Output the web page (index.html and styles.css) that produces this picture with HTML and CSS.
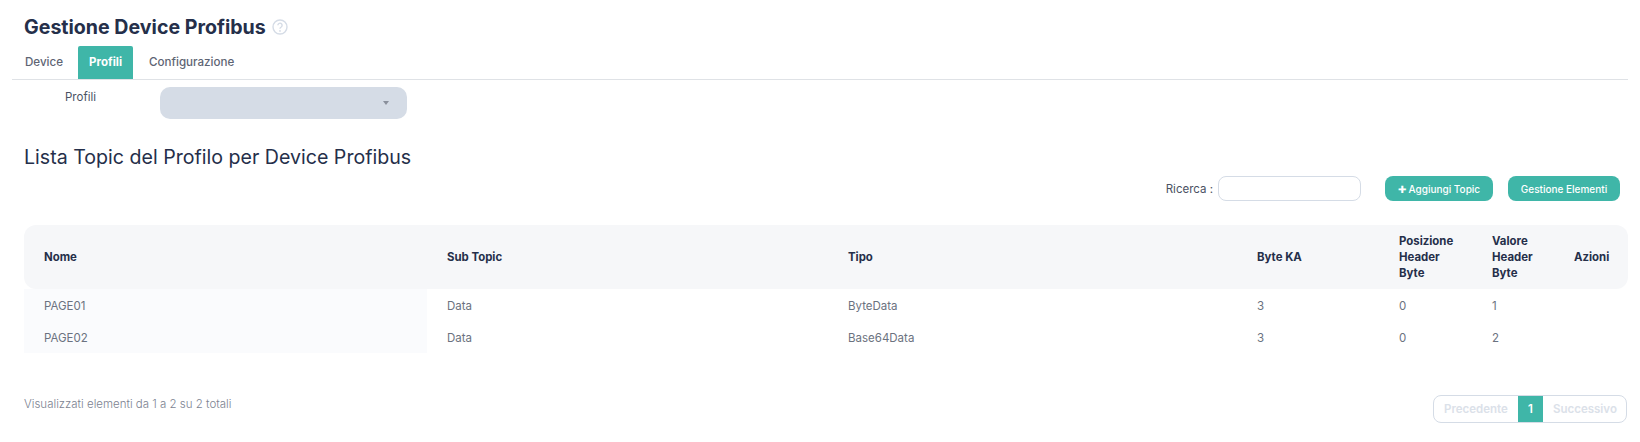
FILE: index.html
```html
<!DOCTYPE html>
<html lang="en">

<head>
    <meta charset="UTF-8">
    <meta name="viewport" content="width=device-width, initial-scale=1.0">
    <title>Gestione Device Profibus</title>
    <link rel="stylesheet" href="styles.css">
</head>

<body>

    <div class="page-title">
        <h1>Gestione Device Profibus</h1>
        <svg class="help-icon" width="16" height="16" viewBox="0 0 16 16">
            <circle cx="8" cy="8" r="7" fill="none" stroke="#d5dce6" stroke-width="1.4"></circle>
            <path d="M5.9 6.3a2.1 2.1 0 1 1 3.3 1.7c-.8.5-1.2.9-1.2 1.8" fill="none" stroke="#d5dce6" stroke-width="1.4"></path>
            <circle cx="8" cy="11.9" r=".9" fill="#d5dce6"></circle>
        </svg>
    </div>

    <ul class="tabs">
        <li class="tab">Device</li>
        <li class="tab active">Profili</li>
        <li class="tab">Configurazione</li>
    </ul>

    <div class="profile-row">
        <label class="profile-label">Profili</label>
        <div class="profile-select"><span class="caret"></span></div>
    </div>

    <h2>Lista Topic del Profilo per Device Profibus</h2>

    <div class="toolbar">
        <label class="search-label">Ricerca :</label>
        <input class="search-input" type="text">
        <button class="button add-button">✚ Aggiungi Topic</button>
        <button class="button manage-button">Gestione Elementi</button>
    </div>

    <table class="topics">
        <colgroup>
            <col class="col-name">
            <col class="col-sub">
            <col class="col-type">
            <col class="col-byte">
            <col class="col-pos">
            <col class="col-val">
            <col class="col-act">
        </colgroup>
        <thead>
            <tr>
                <th>Nome</th>
                <th>Sub Topic</th>
                <th>Tipo</th>
                <th>Byte KA</th>
                <th>Posizione Header Byte</th>
                <th>Valore Header Byte</th>
                <th>Azioni</th>
            </tr>
        </thead>
        <tbody>
            <tr>
                <td class="sorted">PAGE01</td>
                <td>Data</td>
                <td>ByteData</td>
                <td>3</td>
                <td>0</td>
                <td>1</td>
                <td></td>
            </tr>
            <tr>
                <td class="sorted">PAGE02</td>
                <td>Data</td>
                <td>Base64Data</td>
                <td>3</td>
                <td>0</td>
                <td>2</td>
                <td></td>
            </tr>
        </tbody>
    </table>

    <div class="table-footer">
        <div class="info">Visualizzati elementi da 1 a 2 su 2 totali</div>
        <div class="pagination">
            <span class="page-link prev">Precedente</span>
            <span class="page-link current">1</span>
            <span class="page-link next">Successivo</span>
        </div>
    </div>

</body>

</html>
```

FILE: styles.css
```css
body {
    font-family: Inter, "Liberation Sans", sans-serif;
    margin: 0;
    padding: 0 12px;
    background-color: #fff;
    color: #252f4a;
    height: 442px;
    overflow: hidden;
}

.page-title {
    display: flex;
    align-items: center;
    gap: 6px;
    height: 46px;
    padding: 8px 0 0 12px;
    box-sizing: border-box;
}

h1 {
    margin: 0;
    font-size: 19.6px;
    font-weight: 700;
}

.tabs {
    display: flex;
    list-style: none;
    margin: 0;
    padding: 0;
    height: 33px;
    border-bottom: 1px solid #dfe2e6;
}

.tab {
    padding: 0 13px;
    line-height: 33px;
    font-size: 11.6px;
    font-weight: 500;
    color: #5e6473;
}

.tab.active {
    width: 55px;
    padding: 0;
    margin-left: 2px;
    margin-right: 3px;
    text-align: center;
    background-color: #3fb6a8;
    color: #fff;
    font-weight: 700;
    font-size: 11.5px;
    border-radius: 2px 2px 0 0;
}

.profile-row {
    display: flex;
    padding-top: 7px;
}

.profile-label {
    width: 148px;
    padding: 1px 0 0 53px;
    box-sizing: border-box;
    font-size: 11.5px;
    line-height: 18px;
    color: #4b5263;
}

.profile-select {
    position: relative;
    width: 247px;
    height: 32px;
    background-color: #d5dce6;
    border-radius: 10px;
}

.caret {
    position: absolute;
    right: 18px;
    top: 14px;
    border-left: 3px solid transparent;
    border-right: 3px solid transparent;
    border-top: 4px solid #8a909c;
}

h2 {
    margin: 25px 0 0 12px;
    font-size: 19.6px;
    line-height: 26px;
    font-weight: 400;
}

.toolbar {
    display: flex;
    justify-content: flex-end;
    align-items: center;
    height: 25px;
    margin-top: 6px;
    padding-right: 8px;
}

.search-label {
    font-size: 11.5px;
    margin-right: 5px;
    color: #4b5263;
}

.search-input {
    width: 143px;
    height: 25px;
    box-sizing: border-box;
    border: 1px solid #d5dce6;
    border-radius: 8px;
    background-color: #fff;
    margin-right: 24px;
}

.button {
    height: 25px;
    padding: 0;
    font-family: inherit;
    font-size: 10px;
    font-weight: 500;
    background-color: #3fb6a8;
    color: #fff;
    border: none;
    border-radius: 8px;
}

.add-button {
    width: 108px;
    margin-right: 15px;
}

.manage-button {
    width: 112px;
}

.topics {
    width: 1604px;
    margin: 24px 0 0 12px;
    border-collapse: separate;
    border-spacing: 0;
    table-layout: fixed;
    font-size: 11.5px;
}

.col-name { width: 403px; }
.col-sub { width: 401px; }
.col-type { width: 409px; }
.col-byte { width: 142px; }
.col-pos { width: 93px; }
.col-val { width: 82px; }
.col-act { width: 74px; }

.topics th {
    height: 64px;
    box-sizing: border-box;
    padding: 0 20px;
    background-color: #f6f7f9;
    text-align: left;
    font-size: 11.4px;
    line-height: 16px;
    font-weight: 700;
}

.topics th:first-child {
    border-radius: 12px 0 0 12px;
}

.topics th:last-child {
    border-radius: 0 12px 12px 0;
    padding: 0 0 0 20px;
}

.topics td {
    height: 32px;
    box-sizing: border-box;
    padding: 2px 20px 0;
    color: #6b7280;
}

.topics td.sorted {
    background-color: #fafbfd;
}

.table-footer {
    display: flex;
    justify-content: space-between;
    align-items: flex-start;
    margin: 42px 1px 0 12px;
}

.info {
    padding-top: 2px;
    font-size: 11.5px;
    line-height: 14px;
    font-weight: 300;
    color: #7c8391;
}

.pagination {
    display: flex;
    height: 28px;
    box-sizing: border-box;
    border: 1px solid #d5dce6;
    border-radius: 8px;
    overflow: hidden;
}

.page-link {
    line-height: 26px;
    font-size: 11.5px;
    font-weight: 600;
    color: #dbe1e9;
}

.page-link.prev {
    width: 74px;
    padding-left: 10px;
}

.page-link.next {
    width: 73px;
    padding-left: 10px;
}

.page-link.current {
    width: 25px;
    text-align: center;
    background-color: #3fb6a8;
    color: #fff;
}
```
